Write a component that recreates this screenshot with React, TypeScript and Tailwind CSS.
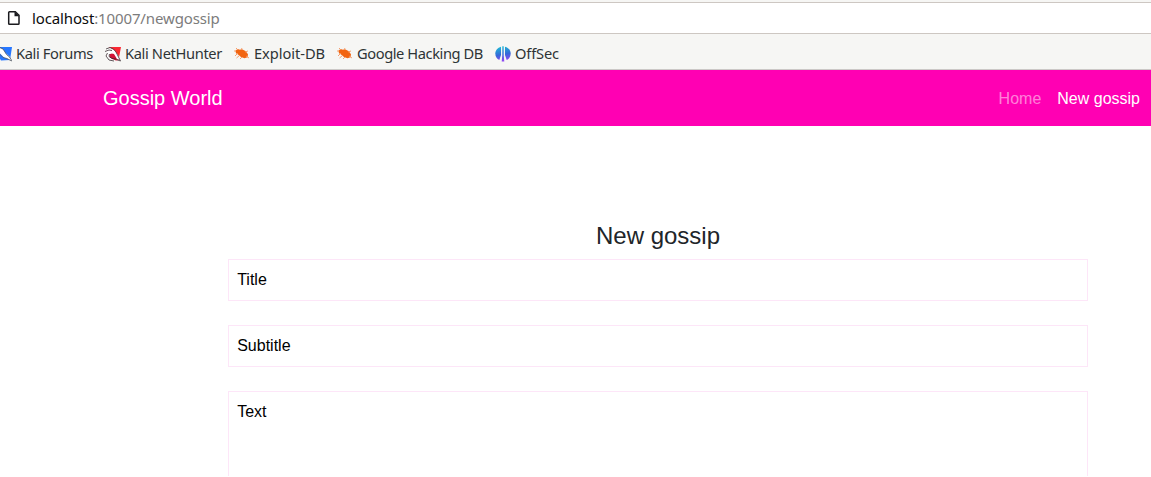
import React from "react";

function KaliIcon() {
  return (
    <svg width="16" height="16" viewBox="0 0 16 16" className="block shrink-0">
      <path d="M2 1h14l-2 13-9 .5L2 9z" fill="#2777ff" />
      <path d="M2 1.500l5 1.500 2.500 4 4 3.500L16 15l-4-2-4-1.500-4-4z" fill="#fff" />
      <path d="M4 1.500l3 1.500 2 3 1.500 2.500 3 2.500 2.500 4" fill="none" stroke="#4a5262" strokeWidth=".8" />
      <path d="M3 7.500l4 4 4 1 4.500 2.500" fill="none" stroke="#555b63" strokeWidth=".8" />
    </svg>
  );
}

function NetHunterIcon() {
  return (
    <svg width="16" height="16" viewBox="0 0 16 16" className="block shrink-0">
      <path d="M3.500 1H16l-2 10.500L9 5z" fill="#fb2733" />
      <path d="M5 8l4-1 3.500 2.500L15 14l-4 .5-4-1.500-2.500-2z" fill="#d01436" />
      <path d="M1 4l4-2 4 2 4 5 2 5-3-1-3-5-3-1-2.500 2 1.500 3 4 2-4-.5-3-3V8z" fill="#fff" />
      <path d="M1 3l4-1.500L8.500 3l2.500 3 2 4 2.500 5-4-1.500M0 5.500L4 4l3 .5M2.500 7L1 10l3 4 5 1" fill="none" stroke="#50464b" strokeWidth=".9" />
      <path d="M4.500 8l-.5 2.500 3 2 4 .5" fill="none" stroke="#40262e" strokeWidth=".8" />
    </svg>
  );
}

function BugIcon() {
  return (
    <svg width="16" height="16" viewBox="0 0 16 16" className="block shrink-0">
      <path d="M1.500 4.700l2-1.700 2.500.8 2-.5 3.500 1.700 2.500 3.200-.5 3-3 1-3.500-1.200-3-2.500-2-1.300z" fill="#f26410" />
      <path d="M4 4L2 2M7 4l1-2M11 6l3-1M4 7l-3 3M5.500 9.500L2.500 12M8 11l-2 2M12 10l3 2M0 5h2" fill="none" stroke="#f59661" strokeWidth=".9" />
    </svg>
  );
}

function OffSecIcon() {
  return (
    <svg width="16" height="16" viewBox="0 0 16 16" className="block shrink-0">
      <defs>
        <linearGradient id="offsec" gradientUnits="userSpaceOnUse" x1="0" y1="0" x2="3" y2="16">
          <stop offset="0" stopColor="#18c8d4" />
          <stop offset=".6" stopColor="#3568d8" />
          <stop offset="1" stopColor="#9248f4" />
        </linearGradient>
      </defs>
      <path d="M6 .7C2.700 1.500.3 4.200.3 7.500c0 3 1.600 5.500 4 6.500L6 9z" fill="url(#offsec)" />
      <path d="M10 .7c3.300.8 5.700 3.500 5.700 6.800 0 3-1.600 5.500-4 6.500L10 9z" fill="url(#offsec)" />
      <path d="M7.300.2h1.400v9l.6 6.300H6.700l.6-6.300z" fill="url(#offsec)" />
    </svg>
  );
}

function Bookmark({
  icon,
  label,
  className,
  tracking,
}: {
  icon: React.ReactNode;
  label: string;
  className: string;
  tracking: string;
}) {
  return (
    <div className={`flex shrink-0 items-center gap-1 ${className}`}>
      {icon}
      <span className={`pb-[3px] leading-5 whitespace-nowrap ${tracking}`}>{label}</span>
    </div>
  );
}

export default function App() {
  return (
    <div className="flex h-[477px] w-full flex-col overflow-hidden bg-white font-['Liberation_Sans',Arial,sans-serif] text-base">
      <div className="h-[2px] shrink-0 bg-[#f6f6f4]" />
      <div className="flex h-8 shrink-0 items-center border-y border-[#cdc7c2] bg-white pl-[7px] font-['Noto_Sans',sans-serif] text-[15px]">
        <svg width="14" height="16" viewBox="0 0 14 16" className="shrink-0">
          <path d="M2.500 1.700h5.800l3.700 3.700v8.100a.8.800 0 0 1-.8.800H2.500a.8.800 0 0 1-.8-.8v-11a.8.800 0 0 1 .8-.8z" fill="none" stroke="#1a1a1e" strokeWidth="1.500" />
          <path d="M7.500 1.500v4.800H12z" fill="#1a1a1e" />
        </svg>
        <span className="ml-[11px] tracking-[-0.13px] text-[#7c7c7c]">
          <span className="text-[#0c0c0d]">localhost</span>:10007/newgossip
        </span>
      </div>
      <div className="flex h-9 shrink-0 items-center border-b border-[#cbc8c6] bg-[#f6f6f4] pt-[5px] font-['Noto_Sans',sans-serif] text-[14.67px] text-[#2e3436]">
        <Bookmark icon={<KaliIcon />} label="Kali Forums" className="-ml-1 w-[109px]" tracking="tracking-[-0.36px]" />
        <Bookmark icon={<NetHunterIcon />} label="Kali NetHunter" className="w-[129px]" tracking="tracking-[-0.36px]" />
        <Bookmark icon={<BugIcon />} label="Exploit-DB" className="w-[103px]" tracking="tracking-[-0.05px]" />
        <Bookmark icon={<BugIcon />} label="Google Hacking DB" className="w-[158px]" tracking="tracking-[-0.42px]" />
        <Bookmark icon={<OffSecIcon />} label="OffSec" className="" tracking="tracking-[-0.15px]" />
      </div>
      <nav className="flex h-14 shrink-0 items-center justify-between bg-[#ff00b3] pr-[11px] pl-[103px] text-white">
        <span className="text-xl">Gossip World</span>
        <div className="flex gap-4 pt-0.5">
          <span className="text-white/50">Home</span>
          <span>New gossip</span>
        </div>
      </nav>
      <main className="ml-[228px] flex w-[860px] flex-col pt-[95px]">
        <h4 className="mb-2 text-center text-2xl leading-[30px] text-[#212529]">New gossip</h4>
        <div className="mb-6 flex h-[42px] items-center border border-[#fde6f8] px-[8.2px] text-black">Title</div>
        <div className="mb-6 flex h-[42px] items-center border border-[#fde6f8] px-[8.2px] text-black">Subtitle</div>
        <div className="h-[85px] border border-b-0 border-[#fde6f8] px-[8.2px] pt-2 text-black">Text</div>
      </main>
    </div>
  );
}
